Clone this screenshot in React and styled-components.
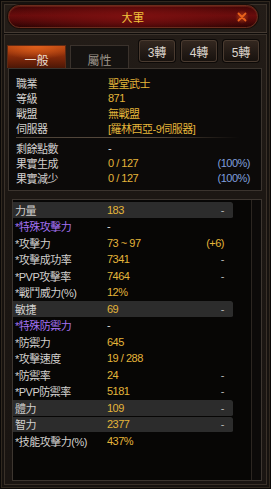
import React from "react";
import styled, { createGlobalStyle, css } from "styled-components";

const GlobalStyle = createGlobalStyle`
  html, body {
    margin: 0;
    padding: 0;
    background: #100d0b;
  }
  body {
    font-family: "Liberation Sans", "Noto Sans CJK TC", sans-serif;
  }
`;

const Frame = styled.div`
  width: 271px;
  height: 489px;
  box-sizing: border-box;
  display: flex;
  flex-direction: column;
  padding-top: 4px;
  background: linear-gradient(180deg, #241d18 0%, #1c1713 40%, #1a1512 100%);
  border: 1px solid #0a0807;
  box-shadow: inset 0 0 0 1px #30281f, inset 0 0 0 3px #16120f,
    inset 0 0 0 4px #3a3129;
`;

const TitleBar = styled.div`
  position: relative;
  height: 23px;
  margin: 0 12px 0 7px;
  box-sizing: border-box;
  border-radius: 12px;
  border: 1px solid #6b2c1c;
  background: radial-gradient(ellipse 60% 80% at 50% 50%, #7c1010 0%, transparent 100%),
    linear-gradient(180deg, #3a0505 0%, #640b0b 45%, #560909 60%, #2a0303 100%);
  box-shadow: 0 0 0 1px #1a0d08, inset 0 1px 0 rgba(200, 90, 60, 0.25);
  display: flex;
  align-items: center;
  justify-content: center;
`;

const Title = styled.span`
  color: #f3c53c;
  font-size: 11px;
  letter-spacing: 0.5px;
`;

const CloseButton = styled.div`
  position: absolute;
  right: 8px;
  top: 50%;
  width: 14px;
  height: 14px;
  margin-top: -7px;
  display: flex;
  align-items: center;
  justify-content: center;
  border-radius: 50%;
  background: radial-gradient(circle, rgba(255, 110, 30, 0.45) 0%, rgba(255, 80, 20, 0) 70%);
`;

const Divider = styled.div`
  height: 3px;
  margin: 4px 3px 0;
  box-sizing: border-box;
  border-top: 1px solid #453b33;
  border-bottom: 1px solid #3a322b;
  background: #0e0b09;
`;

const TabRow = styled.div`
  display: flex;
  align-items: flex-start;
  height: 28px;
  margin-top: 5px;
  padding-left: 6px;
`;

const Tab = styled.div`
  width: 59px;
  height: 23px;
  margin-top: 5px;
  margin-right: 4px;
  box-sizing: border-box;
  display: flex;
  align-items: center;
  justify-content: center;
  padding-top: 4px;
  font-size: 12px;
  border: 1px solid #3a322c;
  border-bottom: none;
  color: #9c948a;
  background: #151210;
  ${(p) =>
    p.$active &&
    css`
      color: #eadcd0;
      border-color: #5e2a14;
      background: radial-gradient(ellipse 70% 60% at 50% 0%, #e0601c 0%, rgba(200, 70, 16, 0) 100%),
        linear-gradient(180deg, #b4420f 0%, #7e2709 55%, #4c1706 100%);
    `}
`;

const Buttons = styled.div`
  display: flex;
  gap: 6px;
  margin-left: 6px;
`;

const StepButton = styled.div`
  width: 36px;
  height: 22px;
  box-sizing: border-box;
  display: flex;
  align-items: center;
  justify-content: center;
  font-size: 12px;
  color: #ddd5cc;
  border: 1px solid #4a3b30;
  border-radius: 3px;
  background: linear-gradient(180deg, #33271f 0%, #221a15 60%, #18120e 100%);
  box-shadow: 0 0 0 1px #0d0a08;
`;

const InfoPanel = styled.div`
  height: 123px;
  margin: 0 8px 0 7px;
  box-sizing: border-box;
  padding-top: 6px;
  border: 1px solid #3b342e;
  background: #0c0a09;
`;

const InfoRow = styled.div`
  display: flex;
  align-items: center;
  height: 15px;
  padding: 0 11px 0 7px;
  font-size: 11px;
  letter-spacing: -0.5px;
`;

const Label = styled.span`
  width: 92px;
  flex-shrink: 0;
  color: ${(p) => (p.$purple ? "#a472f4" : "#d2d0ce")};
  white-space: nowrap;
`;

const Value = styled.span`
  flex: 1;
  color: ${(p) => (p.$plain ? "#dcdcdc" : "#e4b53a")};
  white-space: nowrap;
`;

const Extra = styled.span`
  color: ${(p) => (p.$tone === "blue" ? "#7f9fdc" : p.$tone === "gold" ? "#e4b53a" : "#b8b8b8")};
  white-space: nowrap;
`;

const InfoSeparator = styled.div`
  height: 1px;
  margin: 2px 22px 2px 7px;
  background: linear-gradient(90deg, #4a4036 0%, #5a4c3e 60%, rgba(90, 76, 62, 0) 100%);
`;

const StatsPanel = styled.div`
  display: flex;
  height: 282px;
  margin: 8px 8px 0 11px;
  box-sizing: border-box;
  border: 1px solid #3d3630;
  background: #070605;
`;

const StatsList = styled.div`
  flex: 1;
  padding-top: 2px;
`;

const ScrollTrack = styled.div`
  width: 9px;
  border-left: 1px solid #2c2621;
  background: #0c0a09;
`;

const StatRow = styled.div`
  display: flex;
  align-items: center;
  width: 220px;
  height: 16.5px;
  box-sizing: border-box;
  padding: 0 9px 0 2px;
  font-size: 11px;
  letter-spacing: -0.5px;
  border-bottom: 1px solid transparent;
  background-clip: padding-box;
  border-radius: 0 2px 2px 0;
  ${(p) =>
    p.$highlight &&
    css`
      background-color: #2c2c2c;
    `}
`;

const info = [
  { label: "職業", value: "聖堂武士" },
  { label: "等級", value: "871" },
  { label: "戰盟", value: "無戰盟" },
  { label: "伺服器", value: "[羅林西亞-9伺服器]" },
];

const fruit = [
  { label: "剩餘點數", value: "-", plain: true },
  { label: "果實生成", value: "0 / 127", extra: "(100%)" },
  { label: "果實減少", value: "0 / 127", extra: "(100%)" },
];

const stats = [
  { label: "力量", value: "183", extra: "-", hl: true },
  { label: "*特殊攻擊力", value: "-", purple: true, plain: true },
  { label: "*攻擊力", value: "73 ~ 97", extra: "(+6)", tone: "gold" },
  { label: "*攻擊成功率", value: "7341", extra: "-" },
  { label: "*PVP攻擊率", value: "7464", extra: "-" },
  { label: "*戰鬥威力(%)", value: "12%" },
  { label: "敏捷", value: "69", extra: "-", hl: true },
  { label: "*特殊防禦力", value: "-", purple: true, plain: true },
  { label: "*防禦力", value: "645" },
  { label: "*攻擊速度", value: "19 / 288" },
  { label: "*防禦率", value: "24", extra: "-" },
  { label: "*PVP防禦率", value: "5181", extra: "-" },
  { label: "體力", value: "109", extra: "-", hl: true },
  { label: "智力", value: "2377", extra: "-", hl: true },
  { label: "*技能攻擊力(%)", value: "437%" },
];

const CloseIcon = () => (
  <svg width="10" height="10" viewBox="0 0 10 10">
    <path d="M1.5 1.5 L8.5 8.5 M8.5 1.5 L1.5 8.5" stroke="#e8621c" strokeWidth="1.8" strokeLinecap="round" />
  </svg>
);

const App = () => (
  <>
    <GlobalStyle />
    <Frame>
      <TitleBar>
        <Title>大軍</Title>
        <CloseButton>
          <CloseIcon />
        </CloseButton>
      </TitleBar>
      <Divider />
      <TabRow>
        <Tab $active>一般</Tab>
        <Tab>屬性</Tab>
        <Buttons>
          <StepButton>3轉</StepButton>
          <StepButton>4轉</StepButton>
          <StepButton>5轉</StepButton>
        </Buttons>
      </TabRow>
      <InfoPanel>
        {info.map((r) => (
          <InfoRow key={r.label}>
            <Label>{r.label}</Label>
            <Value>{r.value}</Value>
          </InfoRow>
        ))}
        <InfoSeparator />
        {fruit.map((r) => (
          <InfoRow key={r.label}>
            <Label>{r.label}</Label>
            <Value $plain={r.plain}>{r.value}</Value>
            {r.extra && <Extra $tone="blue">{r.extra}</Extra>}
          </InfoRow>
        ))}
      </InfoPanel>
      <StatsPanel>
        <StatsList>
          {stats.map((s) => (
            <StatRow key={s.label} $highlight={s.hl}>
              <Label $purple={s.purple}>{s.label}</Label>
              <Value $plain={s.plain}>{s.value}</Value>
              {s.extra && <Extra $tone={s.tone}>{s.extra}</Extra>}
            </StatRow>
          ))}
        </StatsList>
        <ScrollTrack />
      </StatsPanel>
    </Frame>
  </>
);

export default App;
